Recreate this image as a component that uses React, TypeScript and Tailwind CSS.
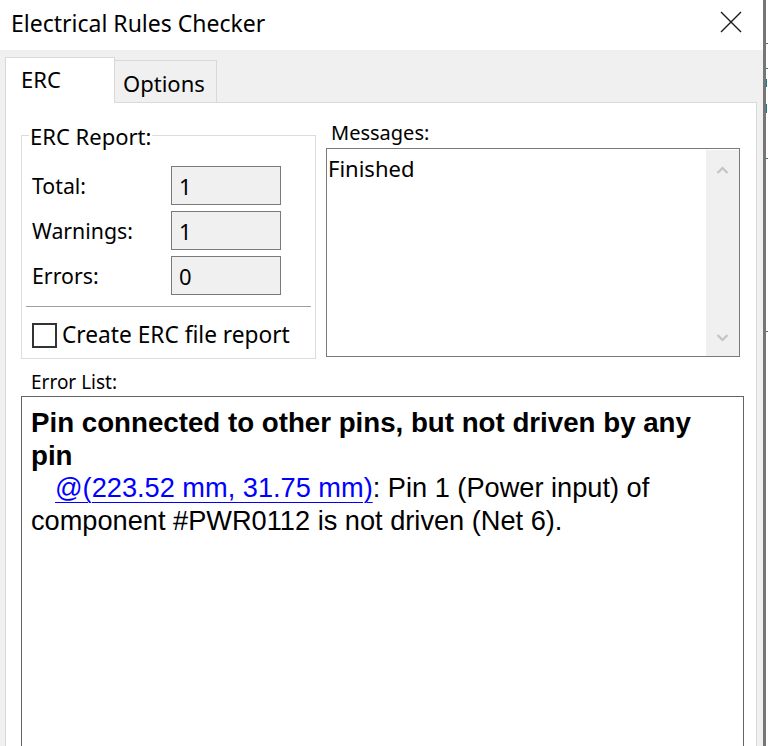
import React from "react";

const rows = [
  { label: "Total:", value: "1" },
  { label: "Warnings:", value: "1" },
  { label: "Errors:", value: "0" },
];

function CloseIcon() {
  return (
    <svg width="22" height="22" viewBox="0 0 22 22" className="mt-[11px]">
      <path d="M1 1 L21 21 M21 1 L1 21" stroke="#1a1a1a" strokeWidth="1.4" fill="none" />
    </svg>
  );
}

function Chevron({ up }: { up?: boolean }) {
  return (
    <svg width="13" height="8" viewBox="0 0 13 8">
      <path d={up ? "M1.5 7 L6.5 2 L11.5 7" : "M1.5 1 L6.5 6 L11.5 1"} stroke="#c4c4c4" strokeWidth="2.2" fill="none" />
    </svg>
  );
}

function ReportGroup() {
  return (
    <div className="relative mt-[14px] h-[224px] w-[295px] border border-[#dcdcdc] pl-[10px] pt-[30px]">
      <span className="absolute -top-[12px] left-[7px] bg-white px-[1px] text-[22px] leading-[24px]">ERC Report:</span>
      <div className="flex flex-col gap-[6px]">
        {rows.map((r) => (
          <div key={r.label} className="flex items-center">
            <span className="w-[139px] text-[21.3px] leading-[24px]">{r.label}</span>
            <div className="flex h-[39px] w-[110px] items-center border border-[#7a7a7a] bg-[#f0f0f0] pl-[7px] text-[22px] leading-[24px]">
              {r.value}
            </div>
          </div>
        ))}
      </div>
      <div className="-ml-[6px] mr-[4px] mt-[11px] h-px bg-[#a0a0a0]" />
      <label className="mt-[15px] flex items-center gap-[5px]">
        <span className="h-[25px] w-[25px] border-2 border-[#333]" />
        <span className="text-[22.7px] leading-[26px]">Create ERC file report</span>
      </label>
    </div>
  );
}

function Messages() {
  return (
    <div className="flex w-[414px] flex-col">
      <div className="pl-[5px] text-[20px] leading-[24px]">Messages:</div>
      <div className="mt-[3px] flex h-[209px] border border-[#7a7a7a] bg-white">
        <div className="flex-1 pl-[1px] pt-[6px] text-[22px] leading-[26px]">Finished</div>
        <div className="mt-px flex w-[33px] flex-col items-center justify-between bg-[#f0f0f0] pb-[14px] pt-[16px]">
          <Chevron up />
          <Chevron />
        </div>
      </div>
    </div>
  );
}

export default function App() {
  return (
    <div className="relative flex h-[746px] w-[768px] overflow-hidden bg-white font-['Noto_Sans','Open_Sans',sans-serif] text-black">
      <div className="flex w-[763px] flex-col">
        <div className="flex h-[50px] shrink-0 items-start justify-between bg-white pl-[11px] pr-[21px]">
          <span className="pt-[9px] text-[23px] leading-[28px]">Electrical Rules Checker</span>
          <CloseIcon />
        </div>
        <div className="flex flex-1 flex-col bg-[#f0f0f0] pl-[5px] pr-[6px] pt-[7px]">
          <div className="flex h-[45px] shrink-0 items-end">
            <div className="relative z-10 -mb-px h-[46px] w-[110px] border border-b-0 border-[#d9d9d9] bg-white pl-[15px] pt-[8px] text-[22px] leading-[26px]">
              ERC
            </div>
            <div className="h-[42px] w-[102px] border border-b-0 border-l-0 border-[#d9d9d9] pl-[8px] pt-[9px] text-[22px] leading-[26px]">
              Options
            </div>
          </div>
          <div className="h-[700px] shrink-0 border border-[#d9d9d9] bg-white pl-[15px] pr-[12px] pt-[18px]">
            <div className="flex items-start gap-[10px]">
              <ReportGroup />
              <Messages />
            </div>
            <div className="ml-[10px] mt-[12px] text-[19px] leading-[22px]">Error List:</div>
            <div className="mt-[3px] h-[400px] border border-[#646464] bg-white pl-[9px] pr-[12px] pt-[10px] font-['Liberation_Sans',Arial,sans-serif] leading-[32.5px]">
              <p className="text-[27.7px] font-bold">Pin connected to other pins, but not driven by any pin</p>
              <p className="indent-[24px] text-[27.2px]">
                <span className="text-[#0000ff] underline decoration-1 underline-offset-[5px]">@(223.52 mm, 31.75 mm)</span>
                : Pin 1 (Power input) of component #PWR0112 is not driven (Net 6).
              </p>
            </div>
          </div>
        </div>
      </div>
      <div className="w-[3px] shrink-0 bg-[#767676]" />
      <div className="relative flex-1 bg-white">
        <div className="absolute left-0 top-[43px] h-px w-full bg-[#2e8b2e]" />
        <div className="absolute left-0 top-[68px] h-px w-full bg-[#2e8b2e]" />
        <div className="absolute left-0 top-[79px] h-[8px] w-px bg-[#1d7f7f]" />
        <div className="absolute left-0 top-[104px] h-[9px] w-px bg-[#1d7f7f]" />
        <div className="absolute left-0 top-[158px] h-px w-full bg-[#2e8b2e]" />
        <div className="absolute left-0 top-[331px] h-px w-full bg-[#2e8b2e]" />
      </div>
    </div>
  );
}
